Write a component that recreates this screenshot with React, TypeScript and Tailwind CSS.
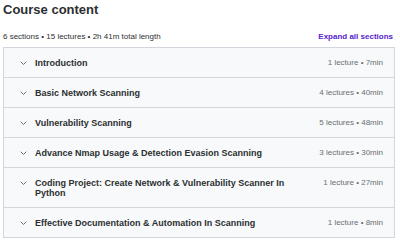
import React from 'react';

const sections = [
  { title: 'Introduction', meta: '1 lecture • 7min' },
  { title: 'Basic Network Scanning', meta: '4 lectures • 40min' },
  { title: 'Vulnerability Scanning', meta: '5 lectures • 48min' },
  { title: 'Advance Nmap Usage & Detection Evasion Scanning', meta: '3 lectures • 30min' },
  { title: 'Coding Project: Create Network & Vulnerability Scanner In Python', meta: '1 lecture • 27min' },
  { title: 'Effective Documentation & Automation In Scanning', meta: '1 lecture • 8min' },
];

const Chevron: React.FC = () => (
  <svg width="7" height="5" viewBox="0 0 7 5" className="shrink-0 mt-[3px]">
    <path d="M1 1 L3.5 3.5 L6 1" fill="none" stroke="#6a6f73" strokeWidth="1" strokeLinecap="round" strokeLinejoin="round" />
  </svg>
);

const App: React.FC = () => {
  return (
    <div
      className="w-[400px] h-[240px] bg-white text-[#2d2f31] overflow-hidden"
      style={{ fontFamily: '"Liberation Sans", Arial, sans-serif' }}
    >
      <div className="px-[3px]">
        <h2 className="text-[13px] leading-[15px] font-bold pt-[2px]">Course content</h2>

        {/* Summary row */}
        <div className="flex items-center justify-between mt-[15px] pr-[4px] text-[8px] leading-[10px]">
          <span>6 sections • 15 lectures • 2h 41m total length</span>
          <button className="font-bold text-[#5624d0]">Expand all sections</button>
        </div>

        {/* Sections */}
        <div className="mt-[5px] w-[392px] border border-[#d1d7dc] bg-[#f7f9fa]">
          {sections.map((s, i) => (
            <div
              key={s.title}
              className={`flex items-start gap-[8px] pl-[16px] pr-[11px] pt-[10px] pb-[9px] ${
                i < sections.length - 1 ? 'border-b border-[#d1d7dc]' : ''
              }`}
            >
              <Chevron />
              <div className="flex-1">
                <div className="max-w-[256px] text-[9px] leading-[10px] font-bold">{s.title}</div>
              </div>
              <div className="text-[8px] leading-[10px] text-[#6a6f73] whitespace-nowrap">{s.meta}</div>
            </div>
          ))}
        </div>
      </div>
    </div>
  );
};

export default App;
